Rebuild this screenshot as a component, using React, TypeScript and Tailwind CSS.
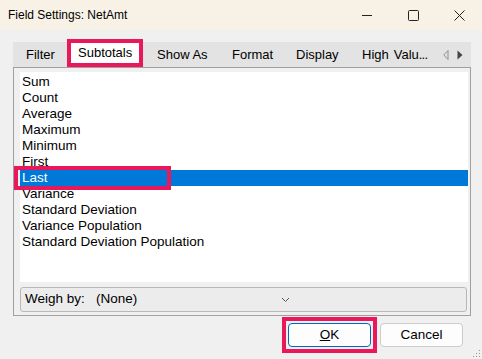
import React from "react";

const items = [
  "Sum",
  "Count",
  "Average",
  "Maximum",
  "Minimum",
  "First",
  "Last",
  "Variance",
  "Standard Deviation",
  "Variance Population",
  "Standard Deviation Population",
];

export default function App() {
  return (
    <div
      className="relative w-[482px] h-[359px] overflow-hidden bg-[#f0f0f0] text-black flex flex-col"
      style={{ fontFamily: '"Liberation Sans", Arial, sans-serif' }}
    >
      {/* Title bar */}
      <div className="h-[30px] bg-[#f8f2e6] flex items-center">
        <div className="pl-[8px] text-[12px] flex-1">Field Settings: NetAmt</div>
        <div className="flex h-full">
          <div className="w-[46px] h-full flex items-center justify-center">
            <svg width="10" height="10" viewBox="0 0 10 10">
              <path d="M0 5.5H10" stroke="#222" strokeWidth="1" />
            </svg>
          </div>
          <div className="w-[46px] h-full flex items-center justify-center">
            <svg width="11" height="11" viewBox="0 0 11 11">
              <rect x="0.5" y="0.5" width="10" height="10" rx="1" fill="none" stroke="#222" strokeWidth="1" />
            </svg>
          </div>
          <div className="w-[46px] h-full flex items-center justify-center">
            <svg width="11" height="11" viewBox="0 0 11 11">
              <path d="M0.5 0.5L10.5 10.5M10.5 0.5L0.5 10.5" stroke="#222" strokeWidth="1" />
            </svg>
          </div>
        </div>
      </div>

      {/* Body */}
      <div className="flex flex-col pl-[13px] pr-[11px] pt-[12px]">
        {/* Tab strip */}
        <div className="relative h-[25px] bg-[#e3e3e3] flex items-center text-[13px] whitespace-nowrap">
          <div className="w-[54px] shrink-0 pl-[13px]">Filter</div>
          <div className="w-[76px] shrink-0 h-[28px] -mt-[3px] bg-white border-[4px] border-[#e8185a] flex items-center pl-[7px] z-10">
            Subtotals
          </div>
          <div className="w-[75px] shrink-0 pl-[14px]">Show As</div>
          <div className="w-[65px] shrink-0 pl-[14px]">Format</div>
          <div className="w-[66px] shrink-0 pl-[13px]">Display</div>
          <div className="w-[94px] shrink-0 pl-[13px] flex">
            <span>High</span>
            <span className="ml-[5px]">
              Valu<span className="tracking-[-0.8px]">...</span>
            </span>
          </div>
          <div className="flex items-center gap-[8px] shrink-0">
            <svg width="6" height="10" viewBox="0 0 6 10">
              <path d="M5 0.5L0.8 5L5 9.5Z" fill="none" stroke="#888" strokeWidth="0.9" />
            </svg>
            <svg width="6" height="10" viewBox="0 0 6 10">
              <path d="M0.5 0.5L5.5 5L0.5 9.5Z" fill="#444" />
            </svg>
          </div>
        </div>

        {/* Panel */}
        <div className="h-[249px] border border-[#a0a0a0] flex flex-col pl-[6px] pr-[2px] pt-[4px]">
          <div className="relative h-[210px] bg-white pt-[2px] text-[13.5px]">
            {items.map((it) => (
              <div
                key={it}
                className={
                  "h-[16px] leading-[16px] pl-[2px] " +
                  (it === "Last" ? "bg-[#0078d7] text-white" : "")
                }
              >
                {it}
              </div>
            ))}
            <div className="absolute left-[-6px] top-[94px] w-[157px] h-[24px] border-[4px] border-[#e8185a]" />
          </div>
          <div className="mt-[5px] mr-[1px] h-[25px] bg-[#ececec] border border-[#b8b8b8] rounded-[3px] flex items-center text-[13.5px]">
            <div className="pl-[4px] w-[75px]">Weigh by:</div>
            <div className="flex-1">(None)</div>
            <svg className="mr-[176px]" width="9" height="6" viewBox="0 0 9 6">
              <path d="M1 1L4.5 4.5L8 1" fill="none" stroke="#555" strokeWidth="1" />
            </svg>
          </div>
        </div>

        {/* Buttons */}
        <div className="flex justify-end gap-[9px] pt-[7px] pr-[8px] text-[13.5px]">
          <div className="relative w-[83px] h-[24px] bg-[#fdfdfd] border border-[#0067c0] rounded-[4px] flex items-center justify-center">
            <span>
              <span className="underline">O</span>K
            </span>
            <div className="absolute left-[-7px] top-[-7px] w-[95px] h-[36px] border-[4px] border-[#e8185a]" />
          </div>
          <div className="w-[83px] h-[24px] bg-[#fdfdfd] border border-[#cccccc] rounded-[4px] flex items-center justify-center">
            Cancel
          </div>
        </div>
      </div>

      {/* Size grip */}
      <svg className="absolute right-[1px] bottom-[1px]" width="9" height="9" viewBox="0 0 9 9">
        <rect x="7" y="1" width="1" height="1" fill="#999" />
        <rect x="4" y="4" width="1" height="1" fill="#999" />
        <rect x="7" y="4" width="1" height="1" fill="#999" />
        <rect x="1" y="7" width="1" height="1" fill="#999" />
        <rect x="4" y="7" width="1" height="1" fill="#999" />
        <rect x="7" y="7" width="1" height="1" fill="#999" />
      </svg>
    </div>
  );
}
